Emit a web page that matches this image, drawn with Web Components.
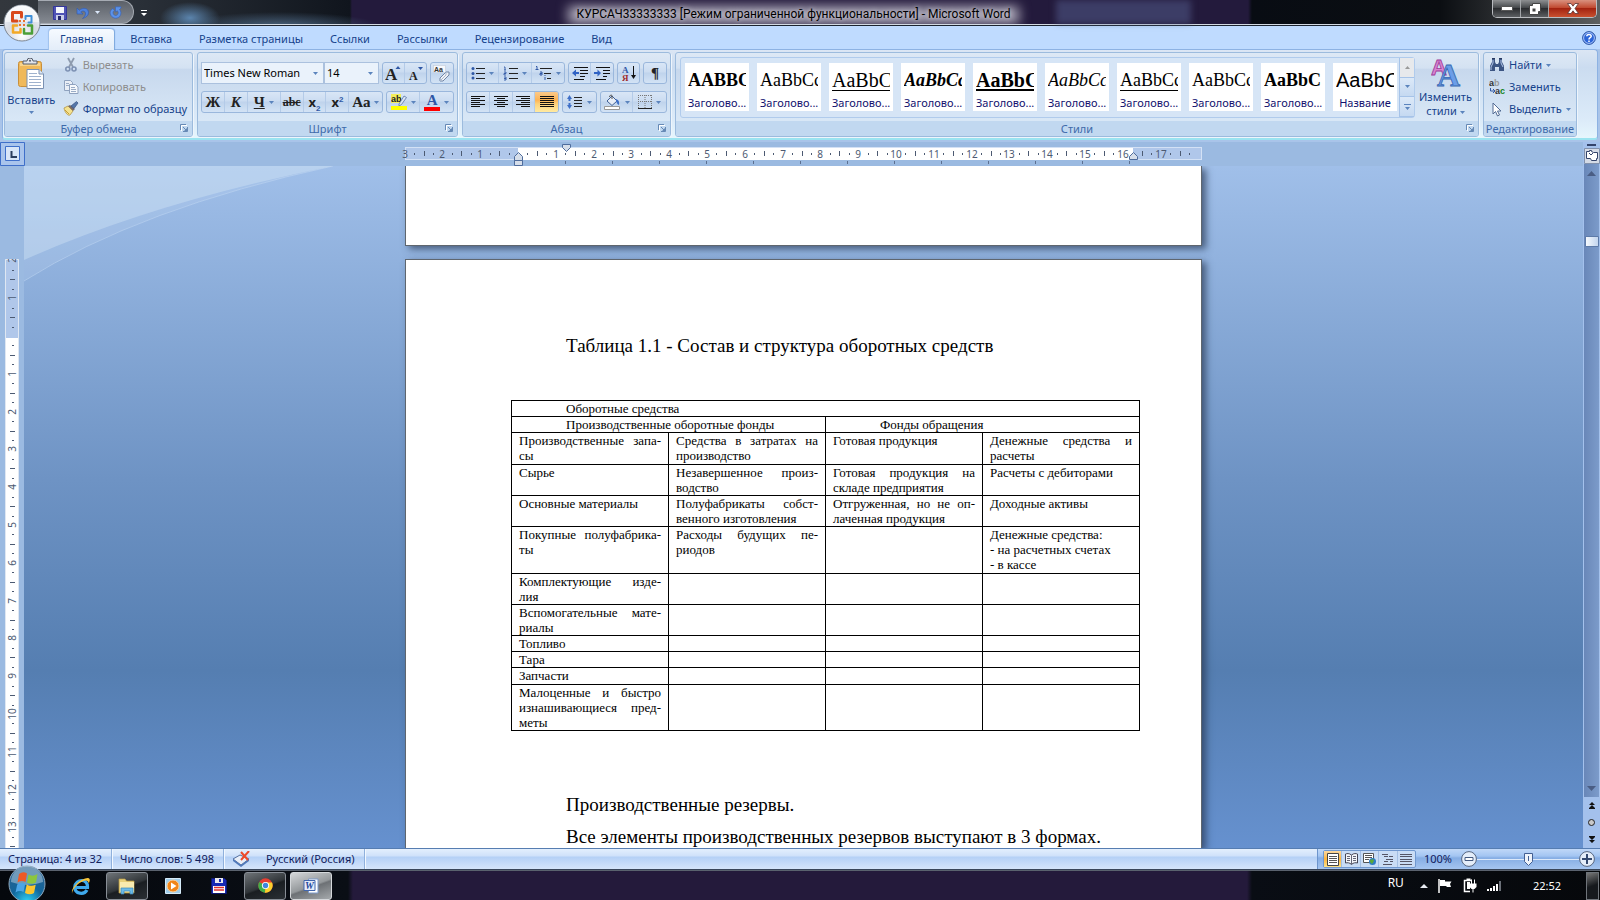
<!DOCTYPE html>
<html lang="ru">
<head>
<meta charset="utf-8">
<title>КУРСАЧ33333333 - Microsoft Word</title>
<style>
  html, body { margin: 0; height: 100%; }
  body {
    display: flex;
    flex-direction: column;
    height: 100vh;
    overflow: hidden;
    font: 11px/16px "Noto Sans", "Open Sans", sans-serif;
    color: #15428b;
    --serif: "Liberation Serif", "Times New Roman", serif;
  }
</style>
</head>
<body>
<title-bar caption="КУРСАЧ33333333 [Режим ограниченной функциональности] - Microsoft Word"></title-bar>
<tab-strip tabs="Главная|Вставка|Разметка страницы|Ссылки|Рассылки|Рецензирование|Вид"></tab-strip>
<word-ribbon></word-ribbon>
<work-space>
  <doc-page part="tail"></doc-page>
  <doc-page part="main"></doc-page>
</work-space>
<status-bar></status-bar>
<task-bar></task-bar>

<script>
/* Icon set: [width, height, svg body] */
const ICONS = {
  arrow: [5, 3, '<path d="M0 0h5L2.500 3z" fill="#5b84bd"/>'],
  launcher: [8, 8, '<path d="M.5 6V.5H6" fill="none" stroke="#6689b5"/><path d="M3 3l3 3M7.500 3v4.500H3" fill="none" stroke="#6689b5"/><path d="M4 7h3V4z" fill="#6689b5"/><path d="M1.500 7V1.500H7" fill="none" stroke="#fff"/>'],
  save: [14, 14, '<path d="M.5.5h13v13h-13z" fill="#5053b5" stroke="#34379a"/><path d="M3 1h8v6H3z" fill="#f4f6fc"/><path d="M3 9h8v5H3z" fill="#c9cde8"/><path d="M5 10h3v4H5z" fill="#23266e"/>'],
  undo: [13, 12, '<path d="M1 1v6h6L4.800 5C7 3.200 9.500 4 9.500 6.500c0 2-1.200 3.500-3 5C10 10.500 12.500 8.500 12.500 5.500 12.500 1 7 0 3.300 3.300z" fill="#4f82dc" stroke="#2f58ad" stroke-width=".6"/>'],
  redo: [13, 13, '<path d="M4 2.500C1 4 .5 7 2 9.500c2 3.500 7 3.500 9 .5 1.500-2.500 1-5-.5-6.500L12 2V.8H6.500V6L8.300 4.800C9.500 6 9.500 7.500 8.500 8.700c-1.200 1.300-3 1-4-.5C3.700 6.800 4 5.500 5.300 4.500z" fill="#5b92ea" stroke="#3560b5" stroke-width=".6"/>'],
  qatArrow: [5, 3, '<path d="M0 0h5L2.500 3z" fill="#dce8fa"/>'],
  qatMore: [6, 6, '<path d="M0 0h6v1H0zM0 3h6L3 6z" fill="#fff"/>'],
  paste: [26, 31, '<rect x="0.500" y="3.500" width="23" height="25" rx="2" fill="#f0b95a" stroke="#c98f3a"/><path d="M2 5h20v3H2z" fill="#f8d48c"/><path d="M5 6V3h4a3 3 0 0 1 6 0h4v3z" fill="#dfe3ea" stroke="#555d6c"/><circle cx="12" cy="2.800" r="1" fill="#555d6c"/><path d="M9 11.500h12l4.500 4.500v14.500H9z" fill="#fff" stroke="#7b91b2"/><path d="M21 11.500V16h4.500" fill="#dce7f5" stroke="#7b91b2"/><path d="M11 15.500h8m-8 3h12m-12 3h12m-12 3h12m-12 3h12" stroke="#9fb2cd"/>'],
  cut: [16, 16, '<path d="M5 1l5 9M11 1L6 10" stroke="#8e9bae" stroke-width="1.800"/><circle cx="4.800" cy="12" r="2" fill="none" stroke="#7d91b3" stroke-width="1.600"/><circle cx="11" cy="12" r="2" fill="none" stroke="#7d91b3" stroke-width="1.600"/>'],
  copy: [16, 16, '<path d="M1.500 1.500h6l2 2v8h-8z" fill="#e9eef6" stroke="#8fa2bf"/><path d="M6.500 5.500h6l2.500 2.500v6.500H6.500z" fill="#f5f8fc" stroke="#8fa2bf"/><path d="M3 4.500h3m-3 2h3m2 2h4m-4 2h5m-5 2h5" stroke="#9aacc6"/>'],
  brush: [16, 16, '<path d="M1 7l4-2 5 5-3 4c-2 1-5-2-6-7z" fill="#f4e28f" stroke="#b49443" stroke-width=".8"/><path d="M2 9l4 4" stroke="#c59b36"/><path d="M5 5l2-1 5 4-2 2z" fill="#7a6b66"/><path d="M8 5l5.500-4.500L15 2l-4 5.500z" fill="#5577aa" stroke="#35507e" stroke-width=".7"/>'],
  grow: [16, 16, '<text x="0" y="15" font-family="Liberation Serif" font-weight="bold" font-size="17" fill="#222">A</text><path d="M10.500 4L13 1l2.500 3z" fill="#2f57a5"/>'],
  shrink: [16, 16, '<text x="1" y="15" font-family="Liberation Serif" font-weight="bold" font-size="12" fill="#222">A</text><path d="M10 2h5l-2.500 3z" fill="#2f57a5"/>'],
  eraser: [18, 18, '<rect x=".5" y="1.500" width="12" height="7" fill="#f6f8fb" stroke="#c1ccdb" stroke-width=".6"/><text x="1" y="7.500" font-family="Liberation Sans" font-weight="bold" font-size="7" fill="#333">Aa</text><path d="M7 14l6-6 3 0 0 3-6 6-3 0z" fill="#eef1f6" stroke="#7185a5"/><path d="M13 8v3l-6 6" fill="none" stroke="#a9b7cc"/>'],
  marker: [16, 16, '<path d="M0 0h10v9H0z" fill="#f3ee5c"/><text x="0" y="8" font-family="Liberation Sans" font-size="9" fill="#222">ab</text><path d="M8 10l5-8 2.500 1.500-5 7L8 12z" fill="#dce6f5" stroke="#5775a8" stroke-width=".8"/><path d="M0 12h16v4H0z" fill="#ff0"/>'],
  bullets: [14, 14, '<g fill="#2f57a5"><circle cx="2" cy="2.500" r="1.500"/><circle cx="2" cy="7.500" r="1.500"/><circle cx="2" cy="12" r="1.500"/></g><path d="M5 2.500h9M5 7.500h9M5 12.500h9" stroke="#222"/>'],
  numbers: [15, 15, '<path d="M1 1h1v3M1 4h2M1 6h2v1.500H1V9h2M1 11h2v3H1m0-1.500h2" fill="none" stroke="#2f57a5" stroke-width=".9"/><path d="M6 2.500h9M6 7.500h9M6 12.500h9" stroke="#222"/>'],
  multilevel: [17, 15, '<path d="M1 .5h1v3M.5 3.500h3M5 6h2v3H5V7.500h2M10 9v1m0 1v3" fill="none" stroke="#2f57a5"/><path d="M5 2.500h12M9 7.500h7M12 12.500h4" stroke="#222"/>'],
  outdent: [16, 13, '<path d="M2 .5h14M8 3.500h8M8 6.500h8M8 9.500h5M2 12.500h10" stroke="#111"/><path d="M0 6l4-3.500V5h3v2H4v2.500z" fill="#2f62c4"/>'],
  indent: [16, 13, '<path d="M2 .5h14M9 3.500h7M9 6.500h7M9 9.500h4M2 12.500h10" stroke="#111"/><path d="M7 6L3.500 2.500V5H0v2h3.500v2.500z" fill="#2f62c4"/>'],
  sort: [14, 16, '<text x="0" y="7.500" font-family="Liberation Serif" font-weight="bold" font-size="9" fill="#2f57a5">А</text><text x="0" y="16" font-family="Liberation Serif" font-weight="bold" font-size="9" fill="#a02c2c">Я</text><path d="M11.500 1v12" stroke="#111"/><path d="M9 10h5l-2.500 4z" fill="#111"/>'],
  alignLeft: [14, 12, '<path d="M0 .5h14M0 2.500h9M0 4.500h14M0 6.500h9M0 8.500h14M0 10.500h9" stroke="#111"/>'],
  alignCenter: [14, 12, '<path d="M0 .5h14M3 2.500h8M0 4.500h14M3 6.500h8M0 8.500h14M3 10.500h8" stroke="#111"/>'],
  alignRight: [14, 12, '<path d="M0 .5h14M5 2.500h9M0 4.500h14M5 6.500h9M0 8.500h14M5 10.500h9" stroke="#111"/>'],
  justify: [14, 12, '<path d="M0 .5h14M0 2.500h14M0 4.500h14M0 6.500h14M0 8.500h14M0 10.500h14" stroke="#111"/>'],
  spacing: [16, 16, '<path d="M0 5l2.500-4L5 5H3.500v2h-2V5zM0 11l2.500 4L5 11H3.500V9h-2v2z" fill="#3f70c8"/><path d="M7 3.500h8M7 6.500h8M7 9.500h8M7 12.500h8" stroke="#222"/>'],
  bucket: [17, 16, '<path d="M3 7l5-5 5 5-5 4.500z" fill="#e8eef7" stroke="#3f5f95"/><path d="M8 5V1.500c-1-1-2.500 0-2.500 1.500" fill="none" stroke="#555"/><path d="M12 5c3 1 3.500 3 3 6-1.500-.5-2-2-3-3.500z" fill="#3f70c8"/><path d="M.5 12.500h15v3H.5z" fill="#fff" stroke="#999"/>'],
  borders: [14, 14, '<path d="M.5 0v13M13.500 0v13M7 0v13M0 .5h14M0 6.500h14" stroke="#777" stroke-dasharray="1 1"/><path d="M0 13.500h14" stroke="#222"/>'],
  styles: [30, 30, '<text x="0" y="17" font-family="Liberation Sans" font-weight="bold" font-size="22" fill="#d884d0" stroke="#9d3c9b" stroke-width=".8">A</text><text x="6" y="28" font-family="Liberation Serif" font-weight="bold" font-size="32" fill="#6b9de8" stroke="#3766b0" stroke-width=".8">A</text>'],
  find: [16, 14, '<path d="M3 1h3v3l1 2h2l1-2V1h3v3l2 4v5h-5V9H6v4H1V8l2-4z" fill="#3c5583"/><path d="M4 2v3L2 9v3M12 2v3l2 4" stroke="#b3c7ea" fill="none"/><path d="M3 0h3v1H3zM10 0h3v1h-3z" fill="#27395e"/>'],
  replace: [16, 16, '<text x="0" y="7" font-family="Liberation Sans" font-weight="bold" font-size="9" fill="#333">a<tspan fill="#9a9a9a">b</tspan></text><path d="M1.500 9v3h4M4 10l2 2-2 2" fill="none" stroke="#2f57a5"/><text x="6" y="15" font-family="Liberation Sans" font-weight="bold" font-size="9" fill="#333">a<tspan fill="#13831c">c</tspan></text>'],
  pointer: [16, 15, '<path d="M4 1v11l2.500-2.500L8.500 14l2-1-2-4H12z" fill="#fff" stroke="#526b93"/>'],
  help: [14, 14, '<circle cx="7" cy="7" r="6.400" fill="#2c64d8" stroke="#1c4390" stroke-width=".8"/><circle cx="7" cy="7" r="5.400" fill="none" stroke="#cfe0ff" stroke-width=".8"/><path d="M4.800 5.300C4.800 3 9.200 3 9.200 5.200 9.200 6.800 7 6.600 7 8.400M7 9.600v1.500" fill="none" stroke="#fff" stroke-width="1.500"/>'],
  orb: [38, 38, '<defs><radialGradient id="g" cx=".5" cy=".85" r=".8"><stop offset="0" stop-color="#fff"/><stop offset=".5" stop-color="#d6dae3"/><stop offset="1" stop-color="#f4f6fa"/></radialGradient></defs><circle cx="19" cy="19" r="18" fill="url(#g)" stroke="#7d8794"/><path d="M2 18a17 17 0 0 1 34 0z" fill="#fff" opacity=".5"/><g fill="none" stroke-linecap="round" stroke-linejoin="round"><path d="M14 17H9.500V8.500h9V13" stroke="#d9481c" stroke-width="3"/><path d="M22.500 15v-3h6v6.500h-3" stroke="#3f8fd8" stroke-width="2"/><path d="M14 21.500h-4v7h7.500V25" stroke="#f2a826" stroke-width="2.500"/><path d="M21 25v4.500h8v-8h-4" stroke="#4c9f38" stroke-width="2.500"/></g><g fill="#e8732d"><rect x="16" y="16" width="2" height="2"/><rect x="20" y="16" width="2" height="2"/><rect x="16" y="20" width="2" height="2"/><rect x="20" y="20" width="2" height="2"/></g>'],
  tabStop: [25, 24, '<path d="M.5.5h24v23H.5z" fill="#a9c4ec" stroke="#3f6fc9"/><path d="M5.500 4.500h14v14h-14z" fill="#d8e5f8" stroke="#3f6fc9"/><path d="M11.500 9v6H17" fill="none" stroke="#2b3d5e" stroke-width="2"/>'],
  min: [12, 5, '<path d="M.5.5h11v4H.5z" fill="#fff" stroke="#555"/>'],
  restore: [12, 12, '<path d="M3.500.5h8v8h-2v3h-9v-9h3z" fill="#fff" stroke="#444"/><path d="M3.500 5.500h3v3h-3z" fill="#444"/>'],
  close: [12, 11, '<path d="M.5.5h3.500l2 2.700L8 .5h3.500L8 5.500l3.500 5H8L6 7.800 4 10.500H.5L4 5.500z" fill="#fff" stroke="#5b3434" stroke-width=".8"/>'],
  spell: [18, 16, '<path d="M1 8l7-4 9 4-8 6z" fill="#e8eef8" stroke="#55709f"/><path d="M1 8v2l8 6 8-6V8l-8 6z" fill="#4f79bb"/><path d="M9 1l7 8M17 0L9 9" stroke="#ee4a2a" stroke-width="2"/>'],
  vPrint: [12, 13, '<path d="M.5.5h11v12H.5z" fill="#fff" stroke="#444"/><path d="M2 3.500h8m-8 2h8m-8 2h8m-8 2h8" stroke="#555"/>'],
  vRead: [13, 12, '<path d="M6.500 2C4 0 2 .5.500 1v9c2-.5 4-.5 6 1.500 2-2 4-2 6-1.500V1C11 .5 9 0 6.500 2z" fill="#f3f6fb" stroke="#445"/><path d="M6.500 2v9M2 3.500h3m-3 2h3m-3 2h3m3-4h3m-3 2h3m-3 2h3" stroke="#667"/>'],
  vWeb: [14, 13, '<path d="M.5.5h10v9H.5z" fill="#fff" stroke="#555"/><path d="M2 2.500h7m-7 2h7m-7 2h4" stroke="#555"/><circle cx="9.500" cy="8.500" r="3.500" fill="#2f7bc4"/><path d="M7 7l3-1 1 2-2 3-2-2z" fill="#5aa83a"/>'],
  vOutline: [11, 12, '<path d="M0 1.500h6M2 3.500h4M7 3.500h4M4 6.500h7M2 8.500h4m2 0h3M1 11.500h9" stroke="#556"/>'],
  vDraft: [12, 11, '<path d="M0 .5h12M0 2.500h12M0 5.500h12M0 7.500h12M0 10.500h12" stroke="#556"/>'],
  zoomOut: [16, 16, '<circle cx="8" cy="8" r="7.400" fill="#e4edf9" stroke="#56657f"/><path d="M4 6.500h8v3H4z" fill="#fff" stroke="#445a80"/>'],
  zoomIn: [16, 16, '<circle cx="8" cy="8" r="7.400" fill="#e4edf9" stroke="#56657f"/><path d="M8 3v10M3 8h10" stroke="#34496f" stroke-width="2"/>'],
  scUp: [9, 5, '<path d="M4.500 0L9 5H0z" fill="#4a5d84"/>'],
  scDown: [9, 5, '<path d="M0 0h9L4.500 5z" fill="#4a5d84"/>'],
  pgUp: [6, 7, '<path d="M3 0l3 3H0zM3 3l3 3H0z" fill="#111"/><path d="M0 6.500h6" stroke="#111"/>'],
  pgDown: [6, 7, '<path d="M3 4l3-3H0zM3 7l3-3H0z" fill="#111"/><path d="M0 .5h6" stroke="#111"/>'],
  ball: [7, 7, '<circle cx="3.500" cy="3.500" r="3" fill="#c9c9c9" stroke="#222"/>'],
  rulerToggle: [16, 16, '<path d="M.5.5h15v15H.5z" fill="#d5dbe6" stroke="#8292ad"/><path d="M2.500 3.500h3V2.500h2v1l2 1h4v6h-1v2h-5l-1-2h-4z" fill="#fff" stroke="#34446b"/><path d="M5 5l2 2 2-2" fill="none" stroke="#34446b"/>'],
  start: [38, 38, '<defs><radialGradient id="s" cx=".5" cy="1" r="1"><stop offset="0" stop-color="#2fd5f7"/><stop offset=".45" stop-color="#12669c"/><stop offset="1" stop-color="#2c5f8c"/></radialGradient></defs><circle cx="19" cy="19" r="18" fill="url(#s)" stroke="#8fa9bf"/><path d="M3 17a16 16 0 0 1 32 0q-16 6-32 0z" fill="#cfe2ee" opacity=".45"/><path d="M11 9q4-3 8-.5L17.500 17q-4-2-8 .5z" fill="#ee5a26"/><path d="M20.500 9.500q4 2.500 9-.5L28 17.500q-4 2.500-9 .2z" fill="#8cc63e"/><path d="M9.200 19.500q4-2.500 8-.5L15.500 27q-4-2-8 .5z" fill="#4aa5e8"/><path d="M18.700 19.500q4 2.300 9 .2L26 28q-4 2.500-9 0z" fill="#fcc62f"/>'],
  ie: [20, 18, '<path d="M3 10.500h13.500C17 1 4.500 1.500 3.800 10c0 7.500 9.500 8 12.200 3" fill="none" stroke="#3fa9ec" stroke-width="3.200"/><path d="M1.500 17C-2 12 10 .5 17 1c3 .5 1.500 4 .5 5.500C18 2 12 2.500 6 8c-3.500 3.500-6 8-4.500 9z" fill="#f6c43a"/>'],
  folder: [18, 18, '<path d="M1 2h6l1.500 2H16v12H1z" fill="#e9d27c" stroke="#b99c45" stroke-width=".7"/><path d="M2 5h14v10H2z" fill="#f8ebb0"/><path d="M3 17v-6h12v6h-3v-3H6v3z" fill="#6bbbe8" stroke="#3a86b8" stroke-width=".7"/>'],
  media: [16, 16, '<path d="M.5.5h15v15H.5z" fill="#9fcdeb" stroke="#d6ecfa"/><circle cx="8" cy="8" r="6" fill="#f08519" stroke="#fbd2a0"/><path d="M6 4.500v7L11.500 8z" fill="#fff"/>'],
  floppy: [16, 16, '<path d="M.5.5h13l2 2v13H.5z" fill="#1728b5" stroke="#0d1771"/><path d="M4 0h8v5H4z" fill="#e8e8ee"/><path d="M8 1h2v3H8z" fill="#1728b5"/><path d="M2 8h12v7H2z" fill="#fff"/><path d="M3 9.500h10M3 12h10" stroke="#e03131" stroke-width="1.500"/>'],
  chrome: [15, 15, '<circle cx="7.500" cy="7.500" r="7.200" fill="#e63e31"/><path d="M7.500 7.500L1.200 4A7.200 7.200 0 0 0 7 14.700z" fill="#3fae49"/><path d="M7.500 7.500L7 14.700A7.200 7.200 0 0 0 14 4.500H7.500z" fill="#fbd12e"/><circle cx="7.500" cy="7.500" r="3.600" fill="#fff"/><circle cx="7.500" cy="7.500" r="2.700" fill="#3f87de"/>'],
  word: [16, 16, '<path d="M5.500 1h9.500v14H5.500z" fill="#fff" stroke="#7d9acb"/><path d="M1 2.500h11v10H1z" fill="#e4ecfa" stroke="#4166ad"/><text x="2" y="11" font-family="Liberation Serif" font-style="italic" font-weight="bold" font-size="10" fill="#24489c">W</text>'],
  trayUp: [8, 4, '<path d="M4 0l4 4H0z" fill="#e8ecf2"/>'],
  flag: [15, 14, '<path d="M1 0v14" stroke="#fff" stroke-width="1.500"/><path d="M2 1h5v1.500h6.500L12 5l1 3H8.500V7H2z" fill="#fff"/>'],
  plug: [14, 15, '<path d="M9 2.500H1.500v11H7" fill="none" stroke="#fff" stroke-width="1.500"/><path d="M3.500.5h4v1.500h-4zM4 4h3v7H4z" fill="#fff"/><path d="M8.500 1.500V6m3-4.500V6" stroke="#fff"/><path d="M6.500 5.500h7V9l-2 2h-3l-2-2z" fill="#fff"/><path d="M10 11v3.500" stroke="#fff"/>'],
  signal: [14, 10, '<path d="M0 8h2v2H0zM3 7h2v3H3zM6 5h2v5H6zM9 3h2v7H9z" fill="#fff"/><path d="M12 0h2v10h-2z" fill="#6b7078"/>']
};

const icon = (name) => {
  const [w, h, body] = ICONS[name];
  return `<svg width="${w}" height="${h}" viewBox="0 0 ${w} ${h}" aria-hidden="true">${body}</svg>`;
};

const BASE = `
  :host, * { box-sizing: border-box; }
  button { font: inherit; color: inherit; background: none; border: 0; padding: 0; margin: 0; }
  svg { display: block; flex: none; }
`;

/* Base class: opens the shadow root and fills it once. */
class WordElement extends HTMLElement {
  connectedCallback() {
    if (this.shadowRoot) return;
    this.attachShadow({ mode: 'open' });
    this.shadowRoot.innerHTML = `<style>${BASE} ${this.styles()}</style>${this.markup()}`;
  }
}

class TitleBar extends WordElement {
  styles() {
    return `
      :host {
        position: relative; z-index: 3; display: flex; align-items: flex-start; flex: none; height: 25px;
        border-bottom: 1px solid #d3dae3;
        background:
          radial-gradient(ellipse 30px 16px at 190px 18px, #5b84ad, transparent),
          radial-gradient(ellipse 100px 14px at 280px 26px, #48617c, transparent),
          linear-gradient(90deg, #33373d 0, #2b3139 130px, #10151d 350px, #231a3c 352px, #231a3c 1248px, #080c13 1252px, #0b0e12 1440px, #5d5f60 100%);
      }
      .orb { position: absolute; left: 3px; top: 4px; }
      .qat {
        display: flex; align-items: center; gap: 9px; height: 24px; width: 96px; margin-left: 38px; padding: 1px 0 0 15px;
        border: 1px solid #a6abb3; border-left: 0; border-radius: 0 12px 12px 0;
        background: linear-gradient(#5b6068, #858a92);
      }
      .qat .undo { display: flex; align-items: center; gap: 6px; }
      .more { margin: 10px 0 0 7px; }
      h1 {
        position: relative; flex: 1; height: 24px; margin: 0; padding-right: 52px; overflow: hidden;
        font: 12px/28px Roboto, "Noto Sans", sans-serif; color: #000; text-align: center; white-space: nowrap;
      }
      h1 span { position: relative; display: inline-block; padding: 0 12px; text-shadow: 0 0 5px #dcdae2; }
      h1 span::before { content: ""; position: absolute; inset: 6px 4px 4px; z-index: -1; background: #aaa6b6; filter: blur(6px); }
      .ghost { position: absolute; left: 66%; top: 0; width: 135px; height: 24px; background: #56608f80; filter: blur(3px); }
      .caps { display: flex; margin-right: 3px; height: 18px; border: 1px solid #b9bcc0; border-top: 0; border-radius: 0 0 5px 5px; overflow: hidden; }
      .caps button { display: grid; place-items: center; width: 28px; background: linear-gradient(#8d8f91, #45484b 45%, #2a2c2f 50%, #5c5f62); border-right: 1px solid #a3a6a9; }
      .caps .x { width: 47px; border: 0; background: linear-gradient(#d9917f, #c14a31 45%, #a32310 50%, #c9502f); }
    `;
  }
  markup() {
    return `
      <div class="qat">
        <button aria-label="Сохранить">${icon('save')}</button>
        <button class="undo" aria-label="Отменить">${icon('undo')}${icon('qatArrow')}</button>
        <button aria-label="Повторить">${icon('redo')}</button>
      </div>
      <button class="more" aria-label="Настройка панели">${icon('qatMore')}</button>
      <button class="orb" aria-label="Office">${icon('orb')}</button>
      <div class="ghost"></div>
      <h1><span>${this.getAttribute('caption')}</span></h1>
      <div class="caps">
        <button aria-label="Свернуть">${icon('min')}</button>
        <button aria-label="Восстановить">${icon('restore')}</button>
        <button class="x" aria-label="Закрыть">${icon('close')}</button>
      </div>`;
  }
}

class TabStrip extends WordElement {
  styles() {
    return `
      :host { position: relative; z-index: 2; display: flex; flex: none; height: 24px; padding: 0 4px 0 49px; background: #bfdbff; border-top: 1px solid #1c2430; }
      nav { display: flex; gap: 5px; flex: 1; padding-top: 2px; }
      nav button { height: 22px; padding: 0 11px 2px; border-top: 1px solid transparent; white-space: nowrap; }
      nav .on { background: linear-gradient(#f6faff, #e3edf9); border-color: #8db2e3; border-radius: 4px 4px 0 0; box-shadow: 1px 0 1px #7ba6dc, -1px 0 1px #9fc1ee; }
      .help { align-self: center; }
    `;
  }
  markup() {
    const tabs = this.getAttribute('tabs').split('|');
    return `<nav>${tabs.map((t, i) => `<button class="${i ? '' : 'on'}">${t}</button>`).join('')}</nav>
      <button class="help" aria-label="Справка">${icon('help')}</button>`;
  }
}

class RibbonGroup extends WordElement {
  styles() {
    return `
      :host { display: flex; flex-direction: column; flex: none; border: 1px solid #9cbbdd; border-radius: 3px; box-shadow: 1px 1px 0 #eef5fc; overflow: hidden; background: linear-gradient(#dde8f5 0, #d4e2f2 18%, #c7d8ed 20%, #d8e7f6 80%); }
      :host([grow]) { flex: 1; min-width: 0; }
      .body { flex: 1; min-height: 0; }
      footer { position: relative; height: 15px; line-height: 16px; text-align: center; color: #3e6aaa; background: #c1d8f0; white-space: nowrap; }
      footer button { position: absolute; right: 4px; top: 3px; }
    `;
  }
  markup() {
    const launcher = this.hasAttribute('launcher') ? `<button aria-label="Параметры">${icon('launcher')}</button>` : '';
    return `<div class="body"><slot></slot></div><footer>${this.getAttribute('label')}${launcher}</footer>`;
  }
}

class ToolSet extends WordElement {
  styles() {
    return `:host { display: flex; height: 22px; border: 1px solid #9ab7dc; border-radius: 3px; overflow: hidden; background: linear-gradient(#d9e6f6, #cbdcf1 45%, #bfd3ec 50%, #d3e3f5); }`;
  }
  markup() {
    return '<slot></slot>';
  }
}

class ToolButton extends WordElement {
  styles() {
    return `
      :host { display: flex; width: 23px; border-right: 1px solid #b4cbe8; font: bold 15px/20px var(--serif); color: #222; }
      :host(:last-child) { border-right: 0; }
      :host([menu]) { width: 33px; }
      :host([narrow]) { width: 22px; }
      :host([on]) { background: linear-gradient(#fbc98a, #fdb455 40%, #fdd27c 60%, #ffeaa0); }
      button { flex: 1; display: flex; align-items: center; justify-content: center; gap: 4px; }
    `;
  }
  markup() {
    const name = this.getAttribute('icon');
    return `<button aria-label="${this.getAttribute('label')}">${name ? icon(name) : '<slot></slot>'}${this.hasAttribute('menu') ? icon('arrow') : ''}</button>`;
  }
}

class StyleCard extends WordElement {
  styles() {
    return `
      :host { display: block; flex: none; width: 64px; }
      button { display: block; width: 64px; height: 48px; padding: 0 3px; background: #fff; text-align: left; }
      .sample { display: block; overflow: hidden; height: 31px; font: 20px/31px var(--serif); color: #000; white-space: nowrap; }
      .b { font-weight: bold; }
      .i { font-style: italic; }
      .u span { display: block; height: 26px; border-bottom: 1px solid #000; }
      .b.u span { border-bottom-width: 2px; }
      .s { font-size: 18px; }
      .sans { font-family: "Liberation Sans", sans-serif; }
      .name { display: block; line-height: 14px; color: #11116e; text-align: center; white-space: nowrap; }
    `;
  }
  markup() {
    return `<button><span class="sample ${this.getAttribute('look') || ''}"><span>${this.getAttribute('sample')}</span></span><span class="name">${this.textContent}</span></button>`;
  }
}

class WordRibbon extends WordElement {
  styles() {
    return `
      :host { display: block; flex: none; height: 93px; padding: 0 2px 2px; background: #a9c4e9; }
      .panel { display: flex; gap: 4px; height: 91px; padding: 2px 20px 1px 1px; border: 1px solid #8db2e3; border-bottom: 2px solid #9be4f0; border-radius: 4px; background: linear-gradient(#dbe6f4, #cbdcf0 20%, #dcebf9 80%, #e6f6fd); }
      .clip { display: flex; width: 187px; }
      .big { display: flex; flex-direction: column; align-items: center; gap: 3px; width: 56px; padding-top: 5px; }
      .list { display: flex; flex-direction: column; padding: 1px 5px; }
      .list button { display: flex; align-items: center; gap: 4px; height: 22px; white-space: nowrap; }
      .list button:disabled { color: #8d8d8d; }
      .rows { display: flex; flex-direction: column; gap: 7px; padding: 9px 3px 0; }
      .row { display: flex; gap: 3px; }
      .font { width: 259px; }
      .para { width: 207px; }
      .combo { display: flex; align-items: center; height: 22px; width: 56px; background: #eaf2fb; border: 1px solid #abc1de; padding-right: 5px; }
      .combo.wide { width: 125px; margin-right: -3px; }
      select { appearance: none; flex: 1; min-width: 0; height: 20px; padding: 0 2px; border: 0; background: none; font: inherit; color: #000; }
      .stylebox { display: flex; padding: 4px 4px 0; }
      .gallery { display: flex; flex: 1; min-width: 0; height: 61px; border: 1px solid #b0cbec; border-radius: 3px; background: #d6e5f6; }
      .cards { display: flex; gap: 8px; flex: 1; min-width: 0; overflow: hidden; padding: 5px 4px; }
      .scroll { display: grid; grid-template-rows: repeat(3, 1fr); width: 15px; border-left: 1px solid #a6c3e8; }
      .scroll button { display: grid; place-items: center; border-bottom: 1px solid #a6c3e8; background: linear-gradient(#dce9f8, #c5d9f1); }
      .scroll .off { background: #e7e9ec; }
      .change { width: 57px; margin-left: 2px; padding: 1px 0 0; gap: 2px; line-height: 14px; }
      .change span { white-space: nowrap; }
      .change svg { display: inline-block; vertical-align: middle; }
      .edit { width: 92px; }
      sub, sup { font: bold 8px/8px "Liberation Sans", sans-serif; color: #2f57a5; }
      s { font-size: 12px; }
      .cx { font: bold 13px/20px "Noto Sans", sans-serif; }
      .red { line-height: 14px; border-bottom: 4px solid #f00; color: #2f57a5; width: 16px; text-align: center; }
    `;
  }
  markup() {
    const samples = [
      ['AABBCC', 'b s'], ['AaBbCcD', 's'], ['AaBbCc', 'u'], ['AaBbCc', 'b i s'], ['AaBbCc', 'b u'],
      ['AaBbCcD', 'i s'], ['AaBbCcD', 's u'], ['AaBbCcD', 's'], ['AaBbC', 'b s'], ['AaBbC', 'sans']
    ];
    const cards = samples.map(([text, look], i) =>
      `<style-card sample="${text}" look="${look}">${i === 9 ? 'Название' : 'Заголово...'}</style-card>`).join('');
    return `
      <div class="panel">
        <ribbon-group label="Буфер обмена" launcher>
          <div class="clip">
            <button class="big">${icon('paste')}<span>Вставить</span>${icon('arrow')}</button>
            <div class="list">
              <button disabled>${icon('cut')}Вырезать</button>
              <button disabled>${icon('copy')}Копировать</button>
              <button>${icon('brush')}Формат по образцу</button>
            </div>
          </div>
        </ribbon-group>
        <ribbon-group label="Шрифт" launcher>
          <div class="rows font">
            <div class="row">
              <span class="combo wide"><select aria-label="Шрифт"><option>Times New Roman</option></select>${icon('arrow')}</span>
              <span class="combo"><select aria-label="Размер"><option>14</option></select>${icon('arrow')}</span>
              <tool-set>
                <tool-button label="Увеличить размер" narrow icon="grow"></tool-button>
                <tool-button label="Уменьшить размер" narrow icon="shrink"></tool-button>
              </tool-set>
              <tool-set><tool-button label="Очистить формат" narrow icon="eraser"></tool-button></tool-set>
            </div>
            <div class="row">
              <tool-set>
                <tool-button label="Полужирный">Ж</tool-button>
                <tool-button label="Курсив"><i>К</i></tool-button>
                <tool-button label="Подчеркнутый" menu><u>Ч</u></tool-button>
                <tool-button label="Зачеркнутый"><s>abc</s></tool-button>
                <tool-button label="Подстрочный"><span class="cx">x<sub>2</sub></span></tool-button>
                <tool-button label="Надстрочный"><span class="cx">x<sup>2</sup></span></tool-button>
                <tool-button label="Регистр" menu>Aa</tool-button>
              </tool-set>
              <tool-set>
                <tool-button label="Цвет выделения" menu icon="marker"></tool-button>
                <tool-button label="Цвет текста" menu><span class="red">A</span></tool-button>
              </tool-set>
            </div>
          </div>
        </ribbon-group>
        <ribbon-group label="Абзац" launcher>
          <div class="rows para">
            <div class="row">
              <tool-set>
                <tool-button label="Маркеры" menu icon="bullets"></tool-button>
                <tool-button label="Нумерация" menu icon="numbers"></tool-button>
                <tool-button label="Многоуровневый список" menu icon="multilevel"></tool-button>
              </tool-set>
              <tool-set>
                <tool-button label="Уменьшить отступ" narrow icon="outdent"></tool-button>
                <tool-button label="Увеличить отступ" narrow icon="indent"></tool-button>
              </tool-set>
              <tool-set><tool-button label="Сортировка" narrow icon="sort"></tool-button></tool-set>
              <tool-set><tool-button label="Все знаки" narrow>¶</tool-button></tool-set>
            </div>
            <div class="row">
              <tool-set>
                <tool-button label="По левому краю" icon="alignLeft"></tool-button>
                <tool-button label="По центру" icon="alignCenter"></tool-button>
                <tool-button label="По правому краю" icon="alignRight"></tool-button>
                <tool-button label="По ширине" icon="justify" on></tool-button>
              </tool-set>
              <tool-set><tool-button label="Интервал" menu icon="spacing"></tool-button></tool-set>
              <tool-set>
                <tool-button label="Заливка" menu icon="bucket"></tool-button>
                <tool-button label="Границы" menu icon="borders"></tool-button>
              </tool-set>
            </div>
          </div>
        </ribbon-group>
        <ribbon-group label="Стили" launcher grow>
          <div class="stylebox">
            <div class="gallery">
              <div class="cards">${cards}</div>
              <div class="scroll">
                <button class="off" aria-label="Вверх"><svg width="5" height="3"><path d="M0 3h5L2.500 0z" fill="#999"/></svg></button>
                <button aria-label="Вниз">${icon('arrow')}</button>
                <button aria-label="Ещё"><svg width="7" height="6"><path d="M0 0h7v1H0zM1 3h5L3.500 6z" fill="#5b84bd"/></svg></button>
              </div>
            </div>
            <button class="big change">${icon('styles')}<span>Изменить<br>стили ${icon('arrow')}</span></button>
          </div>
        </ribbon-group>
        <ribbon-group label="Редактирование">
          <div class="list edit">
            <button>${icon('find')}Найти ${icon('arrow')}</button>
            <button>${icon('replace')}Заменить</button>
            <button>${icon('pointer')}Выделить ${icon('arrow')}</button>
          </div>
        </ribbon-group>
      </div>`;
  }
}

/* Ruler marks are generated: a number per centimetre, a bar at the half, dots at the quarters. */
const CM = 37.8;
const rulerMarks = (zero, from, to, vertical) => {
  let out = '';
  for (let q = from * 4; q <= to * 4; q++) {
    if (q === 0) continue;
    const p = Math.round(zero + q * CM / 4);
    if (q % 4 === 0) {
      out += vertical
        ? `<text transform="translate(11 ${p}) rotate(-90)">${Math.abs(q / 4)}</text>`
        : `<text x="${p}" y="11">${Math.abs(q / 4)}</text>`;
    } else {
      const len = q % 2 === 0 ? 5 : 2;
      const start = q % 2 === 0 ? 4 : 6;
      out += vertical
        ? `<rect x="${start + 1}" y="${p}" width="${len}" height="1"/>`
        : `<rect x="${p}" y="${start}" width="1" height="${len}"/>`;
    }
  }
  return out;
};

class HorizontalRuler extends WordElement {
  styles() {
    return `
      :host { display: block; width: 797px; height: 24px; }
      svg { overflow: visible; }
      text { font: 10px "Noto Sans", sans-serif; text-anchor: middle; }
    `;
  }
  markup() {
    let stops = '';
    for (let i = 1; i <= 13; i++) stops += `<rect x="${113 + i * 47}" y="19" width="1" height="3" fill="#5c6f90"/>`;
    const marker = 'fill="#d6deea" stroke="#4f6c9c"';
    return `<svg width="797" height="24">
      <rect x=".5" y="5.500" width="796" height="12" fill="#b0c7ea" stroke="#d3e1f5"/>
      <rect x="113" y="6" width="615" height="12" fill="#fff"/>
      <g transform="translate(0 5)" fill="#4c5a72">${rulerMarks(113, -3, 17.75, false)}</g>
      ${stops}
      <path d="M157.500 2.500h8v3l-4 4-4-4z" ${marker}/>
      <path d="M109.500 23.500v-5h8v5zM109.500 18.500v-4l4-4 4 4v4z" ${marker}/>
      <path d="M724.500 17.500v-3l4-4 4 4v3z" ${marker}/>
    </svg>`;
  }
}

class VerticalRuler extends WordElement {
  styles() {
    return `
      :host { display: block; width: 14px; margin: 93px 0 0 5px; }
      text { font: 10px "Noto Sans", sans-serif; text-anchor: middle; }
    `;
  }
  markup() {
    return `<svg width="14" height="700">
      <path d="M.5 700V.5h13V700" fill="#fff" stroke="#dfe7f2"/>
      <rect x="1" y="1" width="12" height="78" fill="#b0c7ea"/>
      <g fill="#4c5a72">${rulerMarks(77, -2, 16, true)}</g>
    </svg>`;
  }
}

class ScrollRail extends WordElement {
  styles() {
    return `
      :host { display: flex; flex-direction: column; align-items: center; background: #a4c1ec; }
      .split { width: 9px; height: 2px; margin: 2px 0; background: #34446b; flex: none; }
      .rail { flex: 1; display: flex; flex-direction: column; align-items: center; width: 15px; background: linear-gradient(90deg, #6987b8, #7c9bca); }
      .rail button { display: grid; place-items: center; height: 18px; }
      .thumb { width: 14px; height: 11px; margin: 54px 0 auto; border: 1px solid #5d7aa8; border-radius: 1px; background: linear-gradient(90deg, #f5f9fd, #c3d5ee); }
      .nav { display: grid; place-items: center; height: 17px; }
    `;
  }
  markup() {
    return `<div class="split"></div>
      <button aria-label="Линейка">${icon('rulerToggle')}</button>
      <div class="rail">
        <button aria-label="Прокрутить вверх">${icon('scUp')}</button>
        <div class="thumb"></div>
        <button aria-label="Прокрутить вниз">${icon('scDown')}</button>
      </div>
      <button class="nav" aria-label="Предыдущая страница">${icon('pgUp')}</button>
      <button class="nav" aria-label="Выбор объекта">${icon('ball')}</button>
      <button class="nav" aria-label="Следующая страница">${icon('pgDown')}</button>`;
  }
}

class DocPage extends WordElement {
  styles() {
    return `
      :host { display: block; flex: none; width: 797px; height: 80px; background: #fff; border: 1px solid #5f666e; color: #000; box-shadow: 4px 3px 7px #26364fb0; font: 19px/32px var(--serif); }
      :host([part="tail"]) { border-top: 0; }
      :host([part="main"]) { flex: 1; min-height: 0; padding: 70px 62px 0 112px; border-bottom: 0; }
      p { margin: 0; padding-left: 48px; white-space: nowrap; }
      table { width: 629px; height: 331px; margin: 38px 0 58px -7px; border-collapse: collapse; table-layout: fixed; font-size: 13px; line-height: 15px; }
      td { border: 1px solid #000; padding: 0 7px; vertical-align: top; }
      td.in { padding-left: 54px; }
      span { display: block; white-space: nowrap; }
      span.j { white-space: normal; text-align-last: justify; }
    `;
  }
  markup() {
    if (this.getAttribute('part') === 'tail') return '';
    // "|" ends a justified line, "/" ends a plain one
    const rows = [
      ['Производственные запа-|сы', 'Средства в затратах на|производство', 'Готовая продукция', 'Денежные средства и|расчеты'],
      ['Сырье', 'Незавершенное произ-|водство', 'Готовая продукция на|складе предприятия', 'Расчеты с дебиторами'],
      ['Основные материалы', 'Полуфабрикаты собст-|венного изготовления', 'Отгруженная, но не оп-|лаченная продукция', 'Доходные активы'],
      ['Покупные полуфабрика-|ты', 'Расходы будущих пе-|риодов', '', 'Денежные средства:/- на расчетных счетах/- в кассе'],
      ['Комплектующие изде-|лия', '', '', ''],
      ['Вспомогательные мате-|риалы', '', '', ''],
      ['Топливо', '', '', ''],
      ['Тара', '', '', ''],
      ['Запчасти', '', '', ''],
      ['Малоценные и быстро|изнашивающиеся пред-|меты', '', '', '']
    ];
    const cell = (text) => {
      if (!text) return '<td></td>';
      const parts = text.split('|');
      return `<td>${parts.map((line, i) => i < parts.length - 1
        ? `<span class="j">${line}</span>`
        : line.split('/').map((l) => `<span>${l}</span>`).join('')).join('')}</td>`;
    };
    return `
      <p>Таблица 1.1 - Состав и структура оборотных средств</p>
      <table>
        <tr><td class="in" colspan="4">Оборотные средства</td></tr>
        <tr><td class="in" colspan="2">Производственные оборотные фонды</td><td class="in" colspan="2">Фонды обращения</td></tr>
        ${rows.map((r) => `<tr>${r.map(cell).join('')}</tr>`).join('')}
      </table>
      <p>Производственные резервы.</p>
      <p>Все элементы производственных резервов выступают в 3 формах.</p>`;
  }
}

class WorkSpace extends WordElement {
  styles() {
    return `
      :host { display: grid; grid-template: 24px minmax(0, 1fr) / 24px minmax(0, 1fr) 17px; flex: 1; min-height: 0; overflow: hidden; background: #9bbae1; }
      .corner { overflow: visible; width: 24px; }
      .top { display: flex; justify-content: center; }
      scroll-rail { grid-area: 1 / 3 / 3 / 4; }
      .left { overflow: hidden; }
      .canvas { position: relative; display: flex; flex-direction: column; align-items: center; gap: 13px; overflow: hidden; background: linear-gradient(#a0bfe9, #6e93c4 46%, #557eb1 74%, #6691cf); }
      .swoosh { position: absolute; left: 0; top: 0; }
      ::slotted(*) { position: relative; }
    `;
  }
  markup() {
    return `
      <button class="corner" aria-label="Табуляция">${icon('tabStop')}</button>
      <div class="top"><h-ruler></h-ruler></div>
      <scroll-rail></scroll-rail>
      <div class="left"><v-ruler></v-ruler></div>
      <div class="canvas">
        <svg class="swoosh" width="320" height="120" aria-hidden="true">
          <path d="M0 0h309Q130 36 0 94z" fill="#d3e6f5" opacity=".42"/>
          <path d="M0 0h309Q116 42 0 115z" fill="#c9def5" opacity=".2"/>
          <path d="M309 0Q116 42 0 115" fill="none" stroke="#c4daf4" opacity=".5"/>
        </svg>
        <slot></slot>
      </div>`;
  }
}

const THUMB = `url("data:image/svg+xml,%3Csvg xmlns='http://www.w3.org/2000/svg' width='9' height='13'%3E%3Cpath d='M.5.5h8v8l-4 4-4-4z' fill='%23eef3fa' stroke='%23425f93'/%3E%3Cpath d='M4.500 3v5' stroke='%23425f93'/%3E%3C/svg%3E")`;

class StatusBar extends WordElement {
  styles() {
    return `
      :host { display: flex; flex: none; height: 22px; border-top: 1px solid #567db1; border-bottom: 1px solid #39465a; background: linear-gradient(#e3effd, #cfe1fa 35%, #b4d0f6 40%, #d5e5fb); color: #10205c; line-height: 20px; }
      .info { display: flex; flex: 1; }
      .info button { padding: 0 9px 0 8px; border-right: 1px solid #8fb0dc; box-shadow: 1px 0 0 #f2f8ff; white-space: nowrap; display: flex; align-items: center; gap: 16px; }
      .view { display: flex; align-items: center; padding: 0 5px; background: linear-gradient(#c0d8f8, #a3c5f2 35%, #85ade4 45%, #a5c5f0); border-left: 1px solid #6c94cc; gap: 7px; }
      .modes { display: flex; width: 93px; height: 18px; border: 1px solid #6f97cf; border-radius: 2px; background: #c9dcf5; }
      .modes button { flex: 1; display: grid; place-items: center; border-right: 1px solid #a3bfe4; }
      .modes button:last-child { border-right: 0; }
      .modes .on { background: linear-gradient(#fbd9a2, #fbb33c 50%, #fde28a); }
      .zoom { display: flex; align-items: center; }
      .pct { width: 29px; margin-right: 9px; text-align: right; }
      input { appearance: none; width: 102px; height: 16px; margin: 0; background: linear-gradient(#dce9fa, #dce9fa) center / 100% 1px no-repeat; }
      input::-webkit-slider-thumb { appearance: none; width: 9px; height: 13px; background: ${THUMB}; }
    `;
  }
  markup() {
    const modes = ['vPrint', 'vRead', 'vWeb', 'vOutline', 'vDraft'];
    return `
      <div class="info">
        <button>Страница: 4 из 32</button>
        <button>Число слов: 5 498</button>
        <button>${icon('spell')}<span>Русский (Россия)</span></button>
      </div>
      <div class="view">
        <div class="modes">${modes.map((m, i) => `<button class="${i ? '' : 'on'}" aria-label="Режим ${i + 1}">${icon(m)}</button>`).join('')}</div>
        <div class="zoom">
          <button class="pct">100%</button>
          <button aria-label="Уменьшить">${icon('zoomOut')}</button>
          <input type="range" aria-label="Масштаб" min="0" max="100" value="50">
          <button aria-label="Увеличить">${icon('zoomIn')}</button>
        </div>
      </div>`;
  }
}

class TaskBar extends WordElement {
  styles() {
    return `
      :host { position: relative; display: flex; align-items: center; flex: none; height: 30px; color: #fff; border-top: 1px solid #5a626e; background: linear-gradient(90deg, #05080d 0, #0a0e15 348px, #241a3b 353px, #241a3b 1247px, #090d14 1252px, #06080b 100%); }
      .start { position: absolute; left: 8px; top: -6px; }
      .apps { display: flex; flex: 1; gap: 4px; padding-left: 60px; }
      .apps button { display: grid; place-items: center; width: 42px; height: 28px; border: 1px solid transparent; border-radius: 3px; }
      .apps .open { border-color: #888e96; background: linear-gradient(160deg, #6f7478, #303539 50%, #1a1e22 55%, #2a2f34); }
      .apps .active { border-color: #d5d8db; background: linear-gradient(160deg, #d5d7d9, #94989b 50%, #6d7175 55%, #a5a9ac); }
      .tray { display: flex; align-items: center; }
      .lang { margin: -5px 16px 0 0; font-size: 12px; }
      .tray svg { margin-right: 10px; }
      .clock { margin: 0 25px 0 22px; }
      .desk { width: 13px; height: 28px; margin-right: 1px; border: 1px solid #6f747a; background: linear-gradient(160deg, #777, #16191d 50%); }
    `;
  }
  markup() {
    const apps = [['ie', ''], ['folder', 'open'], ['media', ''], ['floppy', ''], ['chrome', 'open'], ['word', 'active']];
    return `
      <button class="start" aria-label="Пуск">${icon('start')}</button>
      <div class="apps">${apps.map(([n, c]) => `<button class="${c}" aria-label="${n}">${icon(n)}</button>`).join('')}</div>
      <div class="tray">
        <span class="lang">RU</span>
        ${icon('trayUp')}${icon('flag')}${icon('plug')}${icon('signal')}
        <span class="clock">22:52</span>
        <button class="desk" aria-label="Рабочий стол"></button>
      </div>`;
  }
}

customElements.define('title-bar', TitleBar);
customElements.define('tab-strip', TabStrip);
customElements.define('ribbon-group', RibbonGroup);
customElements.define('tool-set', ToolSet);
customElements.define('tool-button', ToolButton);
customElements.define('style-card', StyleCard);
customElements.define('word-ribbon', WordRibbon);
customElements.define('h-ruler', HorizontalRuler);
customElements.define('v-ruler', VerticalRuler);
customElements.define('scroll-rail', ScrollRail);
customElements.define('doc-page', DocPage);
customElements.define('work-space', WorkSpace);
customElements.define('status-bar', StatusBar);
customElements.define('task-bar', TaskBar);
</script>
</body>
</html>
